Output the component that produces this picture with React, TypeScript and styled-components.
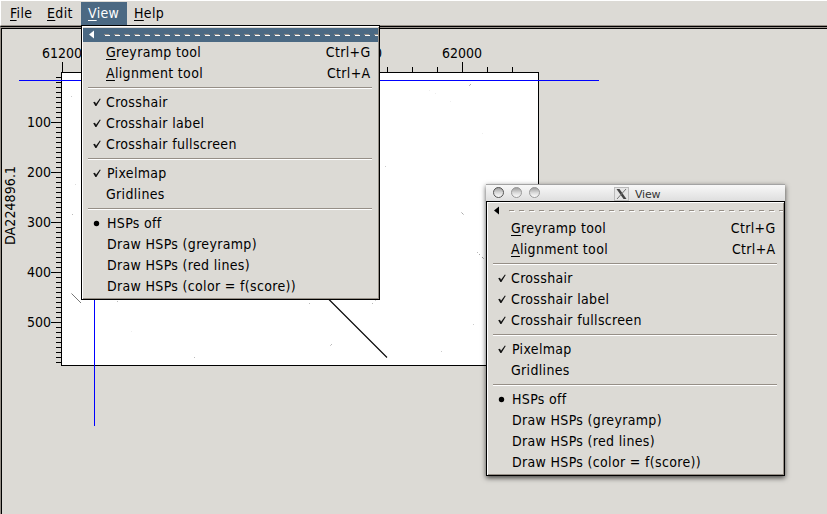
import React from "react";
import styled, { createGlobalStyle, css } from "styled-components";

const BG = "#dcdad5";
const SHADE = "#968f87";

const GlobalStyle = createGlobalStyle`
  html, body { margin: 0; padding: 0; overflow: hidden; }
  body {
    background: ${BG};
    font-family: "DejaVu Sans Condensed", "DejaVu Sans", sans-serif;
    font-stretch: condensed;
    font-size: 14px;
    line-height: 21px;
    color: #000;
  }
`;

const AppWindow = styled.div`
  position: relative;
  display: flex;
  flex-direction: column;
  width: 827px;
  height: 514px;
  overflow: hidden;
  background: ${BG};
`;

const MenuBar = styled.nav`
  display: flex;
  box-sizing: border-box;
  flex: none;
  height: 26px;
  padding: 1px 0 0 1px;
  border-top: 1px solid #fff;
  border-left: 1px solid #fff;
  border-bottom: 1px solid ${SHADE};
`;

const MenuTitle = styled.div<{ $width: number; $pad?: number; $active?: boolean }>`
  box-sizing: border-box;
  width: ${(p) => p.$width}px;
  height: 23px;
  padding-left: ${(p) => p.$pad ?? 7}px;
  line-height: 23px;
  letter-spacing: 0.35px;
  white-space: pre;
  ${(p) => p.$active && css`background: #4b6983; color: #fff;`}
`;

const Mnemonic = styled.span`
  text-decoration: underline;
  text-decoration-thickness: 1px;
  text-underline-offset: 2px;
  text-decoration-skip-ink: none;
`;

const Workspace = styled.main`
  display: flex;
  box-sizing: border-box;
  flex: 1;
  min-height: 0;
  border-top: 1px solid #000;
  border-left: 1px solid ${SHADE};
`;

const Canvas = styled.div`
  box-sizing: border-box;
  flex: 1;
  border-top: 1px solid ${SHADE};
  box-shadow: inset 1px 1px 0 #000;
`;

const Plot = styled.svg`
  display: block;
  margin-left: -1px;
  font-size: 14px;
`;

const MenuPanel = styled.div`
  box-sizing: border-box;
  width: 299px;
  height: 275px;
  padding-top: 1px;
  border: 1px solid #000;
  background: ${BG};
  box-shadow: inset 1px 1px 0 #fff, inset -1px -1px 0 ${SHADE};
`;

const TearRow = styled.div<{ $active?: boolean }>`
  display: flex;
  height: 14px;
  margin: 1px 1px 0 1px;
  background: ${(p) => (p.$active ? "#4b6983" : "transparent")};
  color: ${(p) => (p.$active ? "#fff" : "#000")};
`;

const MenuItem = styled.div`
  display: flex;
  align-items: center;
  height: 21px;
  padding: 0 8.5px 0 10px;
  letter-spacing: 0.33px;
  white-space: pre;
`;

const MarkCell = styled.span<{ $width: number }>`
  display: flex;
  width: ${(p) => p.$width}px;
  height: 21px;
  flex: none;
`;

const ItemLabel = styled.span`
  flex: 1;
`;

const Separator = styled.div`
  box-sizing: border-box;
  height: 8px;
  padding: 3px 7px 0 6px;
  &::before {
    content: "";
    display: block;
    height: 1px;
    border-bottom: 1px solid #fff;
    background: ${SHADE};
  }
`;

const Dropdown = styled.div`
  position: absolute;
  left: 81px;
  top: 25px;
`;

const FloatingWindow = styled.section`
  position: absolute;
  left: 486px;
  top: 184px;
  width: 299px;
  box-shadow: 0 2px 5px rgba(0, 0, 0, 0.7);
`;

const TitleBar = styled.header`
  display: flex;
  align-items: flex-start;
  box-sizing: border-box;
  height: 17px;
  border-top: 1px solid #a3a3a3;
  background: linear-gradient(#f8f8f8, #dedede);
`;

const TitleText = styled.span`
  margin: 3px 0 0 6px;
  font: 11px/14px "DejaVu Sans", sans-serif;
  font-stretch: normal;
  letter-spacing: -0.2px;
  color: #333;
`;

const WindowButtons = styled.svg`
  display: block;
  flex: none;
`;

const XLogo = styled.svg`
  display: block;
  flex: none;
  margin: 2px 0 0 68px;
`;

type Mark = "check" | "radio";
type Entry = { label: string; mnemonic?: boolean; accel?: string; mark?: Mark } | null;

const ENTRIES: Entry[] = [
  { label: "Greyramp tool", mnemonic: true, accel: "Ctrl+G" },
  { label: "Alignment tool", mnemonic: true, accel: "Ctrl+A" },
  null,
  { label: "Crosshair", mark: "check" },
  { label: "Crosshair label", mark: "check" },
  { label: "Crosshair fullscreen", mark: "check" },
  null,
  { label: "Pixelmap", mark: "check" },
  { label: "Gridlines" },
  null,
  { label: "HSPs off", mark: "radio" },
  { label: "Draw HSPs (greyramp)" },
  { label: "Draw HSPs (red lines)" },
  { label: "Draw HSPs (color = f(score))" },
];

function Underlined({ text }: { text: string }) {
  return (
    <>
      <Mnemonic>{text[0]}</Mnemonic>
      {text.slice(1)}
    </>
  );
}

function MarkIcon({ kind }: { kind?: Mark }) {
  if (!kind) return null;
  return (
    <svg width="12" height="21">
      {kind === "check" ? (
        <path d="M1.2 10.2L3 9.8L4 11.8L7.9 6.6L8.7 7L4.4 14H3.4Z" fill="#111" />
      ) : (
        <circle cx="4.5" cy="10.5" r="2.7" />
      )}
    </svg>
  );
}

function ViewMenu({ active }: { active?: boolean }) {
  const dashes = Array.from({ length: 28 }, (_, i) => 21 + i * 10);
  return (
    <MenuPanel>
      <TearRow $active={active}>
        <svg width="295" height="14" shapeRendering="crispEdges">
          <path d="M6 6.5L11 2.5V10.5Z" fill="currentColor" shapeRendering="auto" />
          {dashes.map((x) => (
            <g key={x}>
              <rect x={x} y="6" width="5" height="1" fill={SHADE} />
              <rect x={x + 1} y="7" width="5" height="1" fill="#fff" />
            </g>
          ))}
        </svg>
      </TearRow>
      {ENTRIES.map((e, i) =>
        e === null ? (
          <Separator key={i} />
        ) : (
          <MenuItem key={i}>
            <MarkCell $width={/^[HDP]/.test(e.label) ? 15 : 14}>
              <MarkIcon kind={e.mark} />
            </MarkCell>
            <ItemLabel>{e.mnemonic ? <Underlined text={e.label} /> : e.label}</ItemLabel>
            {e.accel}
          </MenuItem>
        )
      )}
    </MenuPanel>
  );
}

const SPECKS: [number, number, string][] = [
  [71, 96, "#ccc"], [72, 214, "#bbb"], [117, 301, "#bbb"], [194, 357, "#bbb"],
  [309, 303, "#bbb"], [372, 303, "#bbb"], [385, 166, "#ccc"], [470, 84, "#aaa"],
  [469, 85, "#bbb"], [331, 344, "#bbb"], [330, 345, "#ccc"], [461, 212, "#ccc"],
  [462, 213, "#aaa"], [463, 214, "#ccc"], [441, 351, "#ccc"], [477, 252, "#bbb"],
  [479, 254, "#aaa"], [482, 257, "#999"], [483, 258, "#bbb"], [473, 324, "#ccc"],
  [375, 300, "#ccc"], [75, 184, "#ddd"], [131, 331, "#eee"], [482, 133, "#eee"],
  [429, 90, "#eee"], [435, 93, "#eee"], [450, 101, "#eee"],
];

function DotPlot() {
  const leftTicks = Array.from({ length: 58 }, (_, i) => 77 + i * 5);
  const topTicks = Array.from({ length: 19 }, (_, i) => 62 + i * 25);
  return (
    <Plot width="827" height="486" viewBox="0 28 827 486" shapeRendering="crispEdges">
      <rect x="61" y="72" width="478" height="294" />
      <rect x="62" y="73" width="476" height="292" fill="#fff" />
      {leftTicks.map((y) => {
        const major = (y - 72) % 50 === 0;
        return <rect key={y} x={major ? 51 : 56} y={y} width={major ? 10 : 5} height="1" />;
      })}
      {topTicks.map((x) => {
        const major = (x - 62) % 200 === 0 || x === 362;
        return <rect key={x} x={x} y={major ? 62 : 67} width="1" height={major ? 10 : 5} />;
      })}
      {[100, 200, 300, 400, 500].map((v) => (
        <text key={v} x="51" y={v / 2 + 77} textAnchor="end">{v}</text>
      ))}
      {[61200, 61800, 62000].map((v) => (
        <text key={v} x={(v - 61200) / 2 + 62} y="58" textAnchor="middle">{v}</text>
      ))}
      <text transform="translate(15 245) rotate(-90)" letterSpacing="0.1">DA224896.1</text>
      {SPECKS.map(([x, y, c]) => (
        <rect key={`${x}-${y}`} x={x} y={y} width="1" height="1" fill={c} />
      ))}
      <path d="M71.5 293.5L81 303" stroke="#555" strokeWidth="0.8" shapeRendering="auto" />
      <path d="M329 299.5L387 357.5" stroke="#000" strokeWidth="1.1" shapeRendering="auto" />
      <rect x="19" y="80" width="580" height="1" fill="#0000ff" />
      <rect x="94" y="80" width="1" height="346" fill="#0000ff" />
    </Plot>
  );
}

export default function App() {
  return (
    <>
      <GlobalStyle />
      <AppWindow>
        <MenuBar>
          <MenuTitle $width={38} $pad={8}><Underlined text="File" /></MenuTitle>
          <MenuTitle $width={41}><Underlined text="Edit" /></MenuTitle>
          <MenuTitle $width={46} $active><Underlined text="View" /></MenuTitle>
          <MenuTitle $width={44}><Underlined text="Help" /></MenuTitle>
        </MenuBar>
        <Workspace>
          <Canvas>
            <DotPlot />
          </Canvas>
        </Workspace>
        <Dropdown>
          <ViewMenu active />
        </Dropdown>
        <FloatingWindow>
          <TitleBar>
            <WindowButtons width="60" height="16">
              <defs>
                <linearGradient id="bead" x2="0" y2="1">
                  <stop stopColor="#999" />
                  <stop offset=".55" stopColor="#ddd" />
                  <stop offset="1" stopColor="#fff" />
                </linearGradient>
              </defs>
              <circle cx="12.5" cy="7.5" r="5" fill="url(#bead)" stroke="#555" />
              <circle cx="30.5" cy="7.5" r="5" fill="url(#bead)" stroke="#999" />
              <circle cx="48.5" cy="7.5" r="5" fill="url(#bead)" stroke="#999" />
            </WindowButtons>
            <XLogo width="15" height="14">
              <rect x=".5" y=".5" width="14" height="13" fill="#e6e6e6" stroke="#bbb" />
              <path d="M2.5 2H5.5L12.5 12H9.5Z" fill="#444" />
              <path d="M12 2L3 12" stroke="#777" />
            </XLogo>
            <TitleText>View</TitleText>
          </TitleBar>
          <ViewMenu />
        </FloatingWindow>
      </AppWindow>
    </>
  );
}
